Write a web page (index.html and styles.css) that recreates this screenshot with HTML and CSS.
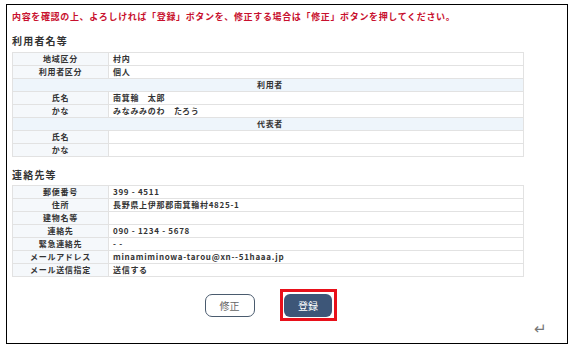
FILE: index.html
```html
<!DOCTYPE html>
<html lang="ja">
<head>
    <meta charset="UTF-8">
    <title>確認画面</title>
    <link rel="stylesheet" href="styles.css">
</head>
<body>
    <div class="frame">
        <p class="notice">内容を確認の上、よろしければ「登録」ボタンを、修正する場合は「修正」ボタンを押してください。</p>

        <h2>利用者名等</h2>
        <table class="info">
            <tr><th>地域区分</th><td>村内</td></tr>
            <tr><th>利用者区分</th><td>個人</td></tr>
            <tr class="sub"><td colspan="2">利用者</td></tr>
            <tr><th>氏名</th><td>南箕輪　太郎</td></tr>
            <tr><th>かな</th><td>みなみみのわ　たろう</td></tr>
            <tr class="sub"><td colspan="2">代表者</td></tr>
            <tr><th>氏名</th><td></td></tr>
            <tr><th>かな</th><td></td></tr>
        </table>

        <h2 class="second">連絡先等</h2>
        <table class="info">
            <tr><th>郵便番号</th><td>399 - 4511</td></tr>
            <tr><th>住所</th><td>長野県上伊那郡南箕輪村4825-1</td></tr>
            <tr><th>建物名等</th><td></td></tr>
            <tr><th>連絡先</th><td>090 - 1234 - 5678</td></tr>
            <tr><th>緊急連絡先</th><td>- -</td></tr>
            <tr><th>メールアドレス</th><td>minamiminowa-tarou@xn--51haaa.jp</td></tr>
            <tr><th>メール送信指定</th><td>送信する</td></tr>
        </table>

        <div class="actions">
            <button class="btn btn-back">修正</button>
            <span class="highlight"><button class="btn btn-submit">登録</button></span>
        </div>
        <div class="return">&#8629;</div>
    </div>
</body>
</html>
```

FILE: styles.css
```css
* {
    box-sizing: border-box;
    margin: 0;
    padding: 0;
}

body {
    font-family: "Noto Sans CJK JP", "Noto Sans", sans-serif;
    background: #fff;
    color: #333;
}

.frame {
    margin: 4px 0 0 6px;
    width: 562px;
    height: 340px;
    border: 1.5px solid #000;
    padding: 6px 43px 0 5px;
}

.notice {
    color: #c8102e;
    font-size: 9px;
    font-weight: bold;
    letter-spacing: 0.65px;
    line-height: 12px;
}

h2 {
    font-size: 10px;
    font-weight: bold;
    letter-spacing: 1.2px;
    line-height: 14px;
    margin: 11px 0 4px;
    color: #333;
}

h2.second {
    margin: 11px 0 3px;
}

.info {
    width: 100%;
    border-collapse: collapse;
    font-size: 8px;
    font-weight: bold;
    letter-spacing: 0.7px;
}

.info th,
.info td {
    border: 1px solid #e2e2e2;
    height: 13px;
    line-height: 10px;
    padding: 0 4px;
    font-weight: bold;
}

.info th {
    width: 96px;
    text-align: center;
    background: #f5f8fb;
}

.info td {
    text-align: left;
}

.info tr.sub td {
    background: #eef5fb;
    text-align: center;
    padding-left: 8px;
}

.actions {
    display: flex;
    justify-content: center;
    align-items: center;
    gap: 25px;
    margin-top: 12px;
    padding-left: 5px;
}

.btn {
    font-family: "Noto Sans CJK JP", sans-serif;
    font-size: 10px;
    height: 23px;
    border-radius: 7px;
    cursor: pointer;
}

.btn-back {
    width: 50px;
    background: #fff;
    color: #666;
    border: 1.5px solid #4a5b6e;
}

.highlight {
    display: inline-flex;
    border: 3.5px solid #e8101a;
    padding: 1.5px 1.5px;
}

.btn-submit {
    width: 48px;
    background: #3d5678;
    color: #fff;
    border: none;
    border-radius: 6px;
}

.return {
    text-align: right;
    color: #777;
    font-size: 15px;
    line-height: 14px;
    margin: 0 -23px 0 0;
}
```
